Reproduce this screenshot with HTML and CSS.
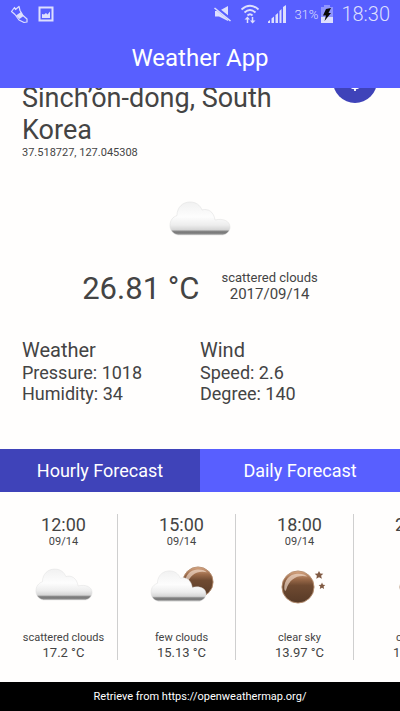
FILE: index.html
```html
<!DOCTYPE html>
<html lang="en">
<head>
<meta charset="utf-8">
<meta name="viewport" content="width=device-width, initial-scale=1">
<title>Weather App</title>
<link rel="stylesheet" href="styles.css">
</head>
<body>
<svg class="defs" width="0" height="0" aria-hidden="true">
  <defs>
    <linearGradient id="cloud-fill" x1="0" y1="0" x2="0" y2="1">
      <stop offset="0" stop-color="#f1f1f1"/>
      <stop offset="0.45" stop-color="#fdfdfd"/>
      <stop offset="0.7" stop-color="#ededed"/>
      <stop offset="0.84" stop-color="#d6d6d6"/>
      <stop offset="0.89" stop-color="#858585"/>
      <stop offset="0.94" stop-color="#777777"/>
      <stop offset="1" stop-color="#b5b5b5"/>
    </linearGradient>
    <linearGradient id="moon-fill" x1="0" y1="0" x2="0" y2="1">
      <stop offset="0" stop-color="#d9a884"/>
      <stop offset="0.25" stop-color="#9c6b4a"/>
      <stop offset="0.45" stop-color="#6f4a31"/>
      <stop offset="1" stop-color="#573a27"/>
    </linearGradient>
    <symbol id="cloud" viewBox="0 0 62 36">
      <path d="M9 34C4 33 1 29 1 24.500C1 19 4 16 8 14.500C8 6 14 1 21 1C27 1 31 4 33 9C39 7 45 11 46 19C54 17 61 20 61 26C61 30 58 33 54 34Z" fill="url(#cloud-fill)" stroke="#dedede" stroke-opacity=".5" stroke-width="1"/>
    </symbol>
    <symbol id="moon" viewBox="0 0 36 36">
      <circle cx="18" cy="18" r="17" fill="url(#moon-fill)" stroke="#b78f72" stroke-width="1"/>
      <path d="M3.500 20C3 11 9 4.500 17 4C22 3.500 26 5 28 7C18 4.500 9 9 5.500 21C5 23 4 22 3.500 20Z" fill="#f5dfcf" opacity=".65"/>
    </symbol>
    <symbol id="clear-night" viewBox="0 0 46 34">
      <use href="#moon" x="0" y="0" width="34" height="34"/>
      <path d="M38 1l1.300 2.600 3 .2-2.200 2 .8 3-2.900-1.600-2.700 1.600.6-3-2.200-2 3-.3zM41 12.500l1 2.200 2.300.2-1.700 1.600.5 2.400-2.100-1.200-2.200 1.200.5-2.400-1.700-1.600 2.400-.2z" fill="#805a43"/>
    </symbol>
    <symbol id="few-clouds" viewBox="0 0 64 37">
      <use href="#moon" x="32" y="0" width="32" height="32"/>
      <use href="#cloud" x="0" y="4" width="57" height="33"/>
    </symbol>
  </defs>
</svg>

<header class="app-bar">
  <div class="status">
    <div class="status-left">
      <svg width="19" height="19" viewBox="0 0 19 19" fill="none" stroke="#dddffe" stroke-linejoin="round">
        <path d="M1.500 6.500L4.500 2.500L5.500 4.500L9 1.500L10 5.500L13 10.500L17 14V17L14 17.500L9 15L5 9.500Z" stroke-width="1.200"/>
        <path d="M6 10.500L11 7L13.500 11L9.500 14Z" fill="#dddffe" stroke="none"/>
      </svg>
      <svg width="16" height="18" viewBox="0 0 16 18">
        <path d="M1.500 2.500H14.500V15.500H1.500Z" fill="none" stroke="#dddffe" stroke-width="2"/>
        <path d="M4 13V9L6 9.500L8 8L9.500 9.500L12 6.500V13Z" fill="#dddffe"/>
      </svg>
    </div>
    <div class="status-right">
      <svg width="18" height="18" viewBox="0 0 18 18">
        <path d="M1 6H5L14 1V16L5 11.500H1Z" fill="#dddffe"/>
        <path d="M1 2L17 15" stroke="#585fff" stroke-width="3.500"/>
        <path d="M.500 3L16.500 16" stroke="#dddffe" stroke-width="1.600"/>
      </svg>
      <svg width="20" height="20" viewBox="0 0 20 20" fill="none" stroke="#dddffe" stroke-width="1.800">
        <path d="M1.500 5.500Q10-2 18.500 5.500M4.500 8.500Q10 3.500 15.500 8.500M7.500 11.500Q10 9 12.500 11.500"/>
        <path d="M7.500 19V14M12.500 13V18" stroke-width="1.500"/>
        <path d="M4.500 15.500L7.500 12.500L10 15.500ZM10 16.500H15.500L12.500 19.500Z" fill="#dddffe" stroke="none"/>
      </svg>
      <svg width="18" height="18" viewBox="0 0 18 18" fill="#dddffe">
        <path d="M0 18V16.500L2 15V18ZM3.500 18V13.500L6 11.500V18ZM7.500 18V10L10 8V18ZM11.500 18V6L13.500 4V18ZM15 18V2L18 0V18Z"/>
      </svg>
      <div class="battery">
        <span class="battery-level">31%</span>
        <svg width="12" height="18" viewBox="0 0 12 18">
          <path d="M3 0H9V2H12V12H0V2H3Z" fill="#8f94ff"/>
          <path d="M0 12H12V18H0Z" fill="#dddffe"/>
          <path d="M5 4L10 3L7.500 8H10L3.500 16L5 10.500H2Z" fill="#090909"/>
        </svg>
      </div>
      <time class="clock">18:30</time>
    </div>
  </div>
  <h1 class="app-title">Weather App</h1>
</header>

<main class="content">
  <section class="location">
    <div class="place">
      <h2 class="place-name">Sinch’ŏn-dong, South Korea</h2>
      <p class="coords">37.518727, 127.045308</p>
    </div>
    <button class="locate" type="button" aria-label="Use my location">
      <svg width="22" height="22" viewBox="0 0 24 24" fill="none" stroke="#fff" stroke-width="2">
        <circle cx="12" cy="12" r="8"/>
        <circle cx="12" cy="12" r="3" fill="#fff"/>
        <path d="M12 1V4M12 20V23M1 12H4M20 12H23"/>
      </svg>
    </button>
  </section>

  <svg class="current-icon" width="62" height="36" role="img" aria-label="scattered clouds"><use href="#cloud"/></svg>

  <section class="current">
    <p class="temperature">26.81 °C</p>
    <div class="summary">
      <p class="condition">scattered clouds</p>
      <p class="date">2017/09/14</p>
    </div>
  </section>

  <section class="details">
    <div class="detail">
      <h3>Weather</h3>
      <p>Pressure: 1018</p>
      <p>Humidity: 34</p>
    </div>
    <div class="detail">
      <h3>Wind</h3>
      <p>Speed: 2.6</p>
      <p>Degree: 140</p>
    </div>
  </section>

  <nav class="tabs">
    <button class="tab tab-active" type="button">Hourly Forecast</button>
    <button class="tab" type="button">Daily Forecast</button>
  </nav>

  <section class="forecast">
    <article class="hour">
      <p class="hour-time">12:00</p>
      <p class="hour-small">09/14</p>
      <div class="hour-icon"><svg width="58" height="34"><use href="#cloud"/></svg></div>
      <p class="hour-small">scattered clouds</p>
      <p class="hour-temp">17.2 °C</p>
    </article>
    <article class="hour">
      <p class="hour-time">15:00</p>
      <p class="hour-small">09/14</p>
      <div class="hour-icon"><svg width="64" height="37"><use href="#few-clouds"/></svg></div>
      <p class="hour-small">few clouds</p>
      <p class="hour-temp">15.13 °C</p>
    </article>
    <article class="hour">
      <p class="hour-time">18:00</p>
      <p class="hour-small">09/14</p>
      <div class="hour-icon hour-icon-night"><svg width="46" height="34"><use href="#clear-night"/></svg></div>
      <p class="hour-small">clear sky</p>
      <p class="hour-temp">13.97 °C</p>
    </article>
    <article class="hour">
      <p class="hour-time">21:00</p>
      <p class="hour-small">09/14</p>
      <div class="hour-icon hour-icon-night"><svg width="46" height="34"><use href="#clear-night"/></svg></div>
      <p class="hour-small">clear sky</p>
      <p class="hour-temp">12.45 °C</p>
    </article>
  </section>
</main>

<footer class="footer">Retrieve from https://openweathermap.org/</footer>
</body>
</html>
```
FILE: styles.css
```css
:root {
  --primary: #585fff;
  --primary-dark: #3f43b9;
  --text: #444444;
  --surface: #fffefd;
}

* {
  box-sizing: border-box;
}

body {
  margin: 0;
  height: 100vh;
  display: flex;
  flex-direction: column;
  overflow: hidden;
  background: var(--surface);
  color: var(--text);
  font-family: Roboto, "Liberation Sans", sans-serif;
}

h1,
h2,
h3,
p {
  margin: 0;
  font-weight: 400;
}

button {
  border: 0;
  padding: 0;
  font: inherit;
  color: inherit;
}

svg {
  display: block;
  flex: none;
}

.defs {
  position: absolute;
}

/* App bar */
.app-bar {
  flex: none;
  background: var(--primary);
  color: #ffffff;
}

.status {
  display: flex;
  justify-content: space-between;
  align-items: center;
  height: 28px;
  padding: 0 10px;
  color: #dddffe;
}

.status-left,
.status-right,
.battery {
  display: flex;
  align-items: center;
}

.status-left {
  gap: 9px;
}

.status-right {
  gap: 8px;
}

.battery {
  gap: 3px;
}

.battery-level {
  font-size: 13px;
  font-weight: 300;
}

.clock {
  font-size: 20px;
  font-weight: 300;
}

.app-title {
  font-size: 24px;
  line-height: 60px;
  text-align: center;
}

/* Scrolled content, resting at its lower end */
.content {
  flex: 1;
  min-height: 0;
  display: flex;
  flex-direction: column;
  justify-content: flex-end;
  overflow: hidden;
}

.content > * {
  flex: none;
}

.location {
  display: flex;
  justify-content: space-between;
  align-items: flex-start;
  gap: 48px;
  padding: 0 23px 0 22px;
}

.place {
  padding-top: 23px;
}

.place-name {
  font-size: 27px;
  line-height: 32px;
}

.coords {
  font-size: 11px;
  line-height: 14px;
}

.locate {
  flex: none;
  display: flex;
  align-items: center;
  justify-content: center;
  width: 44px;
  height: 44px;
  border-radius: 50%;
  background: var(--primary-dark);
}

.current-icon {
  align-self: center;
  margin: 41px 0 33px;
}

.current {
  display: flex;
  justify-content: center;
  align-items: flex-end;
  gap: 22px;
  margin-bottom: 36px;
}

.temperature {
  font-size: 31px;
  line-height: 28px;
}

.summary {
  text-align: center;
}

.condition {
  font-size: 13px;
  line-height: 16px;
}

.date {
  font-size: 15px;
  line-height: 17px;
}

.details {
  display: grid;
  grid-template-columns: 1fr 1fr;
  padding: 0 22px;
  margin-bottom: 45px;
  font-size: 18px;
  line-height: 21px;
}

.detail h3 {
  font-size: 20px;
  line-height: 23px;
}

.tabs {
  display: grid;
  grid-template-columns: 1fr 1fr;
}

.tab {
  height: 43px;
  background: var(--primary);
  color: #ffffff;
  font-size: 18px;
}

.tab-active {
  background: var(--primary-dark);
}

/* Forecast strip */
.forecast {
  display: flex;
  overflow: hidden;
  padding: 22px 0;
}

.hour {
  flex: none;
  width: 118px;
  padding-left: 10px;
  border-right: 1px solid #cfcfcf;
  text-align: center;
}

.hour-time {
  font-size: 18px;
  line-height: 21px;
}

.hour-small {
  font-size: 11px;
  line-height: 14px;
}

.hour-icon {
  display: flex;
  align-items: center;
  justify-content: center;
  height: 82px;
  padding-bottom: 11px;
}

.hour-icon-night {
  padding-left: 8px;
  padding-bottom: 7px;
}

.hour-temp {
  font-size: 13px;
  line-height: 15px;
}

.footer {
  flex: none;
  background: #000000;
  color: #ffffff;
  font-size: 11px;
  line-height: 29px;
  text-align: center;
}
```
